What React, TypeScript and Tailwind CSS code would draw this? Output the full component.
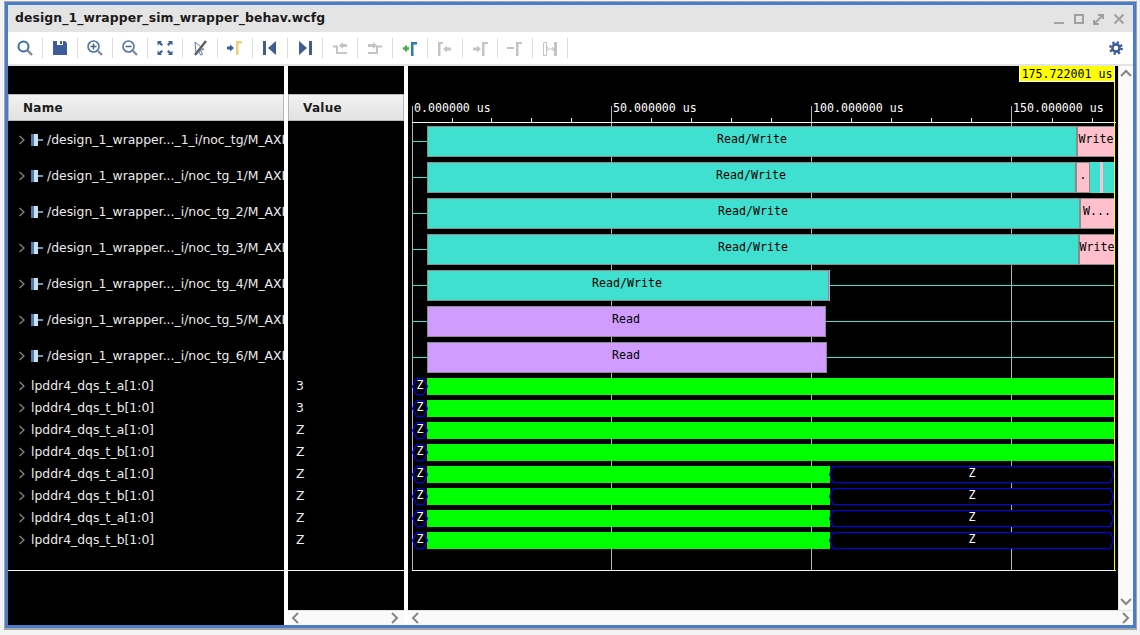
const BLUE = "#3d5c99";
const GRAY = "#c4c4c4";

const groupRows = [
  "/design_1_wrapper..._1_i/noc_tg/M_AXI",
  "/design_1_wrapper..._i/noc_tg_1/M_AXI",
  "/design_1_wrapper..._i/noc_tg_2/M_AXI",
  "/design_1_wrapper..._i/noc_tg_3/M_AXI",
  "/design_1_wrapper..._i/noc_tg_4/M_AXI",
  "/design_1_wrapper..._i/noc_tg_5/M_AXI",
  "/design_1_wrapper..._i/noc_tg_6/M_AXI",
];

const busRows = [
  { name: "lpddr4_dqs_t_a[1:0]", value: "3", end: 1114 },
  { name: "lpddr4_dqs_t_b[1:0]", value: "3", end: 1114 },
  { name: "lpddr4_dqs_t_a[1:0]", value: "Z", end: 1114 },
  { name: "lpddr4_dqs_t_b[1:0]", value: "Z", end: 1114 },
  { name: "lpddr4_dqs_t_a[1:0]", value: "Z", end: 830 },
  { name: "lpddr4_dqs_t_b[1:0]", value: "Z", end: 830 },
  { name: "lpddr4_dqs_t_a[1:0]", value: "Z", end: 830 },
  { name: "lpddr4_dqs_t_b[1:0]", value: "Z", end: 830 },
];

const TEAL = "#40e0d0";
const PINK = "#ffc0cb";
const PURPLE = "#d09cff";

type Seg = { x0: number; x1: number; fill: string; label?: string; cx?: number; flat?: boolean };

const txnRows: Seg[][] = [
  [
    { x0: 427, x1: 1077, fill: TEAL, label: "Read/Write", cx: 752 },
    { x0: 1077, x1: 1114, fill: PINK, label: "Write", cx: 1096 },
  ],
  [
    { x0: 427, x1: 1076, fill: TEAL, label: "Read/Write", cx: 751 },
    { x0: 1076, x1: 1090, fill: PINK, label: ".", cx: 1083 },
    { x0: 1090, x1: 1100, fill: TEAL, flat: true },
    { x0: 1100, x1: 1103, fill: PINK, flat: true },
    { x0: 1103, x1: 1114, fill: TEAL, flat: true },
  ],
  [
    { x0: 427, x1: 1080, fill: TEAL, label: "Read/Write", cx: 753 },
    { x0: 1080, x1: 1114, fill: PINK, label: "W...", cx: 1097 },
  ],
  [
    { x0: 427, x1: 1079, fill: TEAL, label: "Read/Write", cx: 753 },
    { x0: 1079, x1: 1114, fill: PINK, label: "Write", cx: 1097 },
  ],
  [{ x0: 427, x1: 829, fill: TEAL, label: "Read/Write", cx: 627 }],
  [{ x0: 427, x1: 826, fill: PURPLE, label: "Read", cx: 626 }],
  [{ x0: 427, x1: 827, fill: PURPLE, label: "Read", cx: 626 }],
];

function Chevron({ dir }: { dir: "left" | "right" | "up" | "down" }) {
  const points = {
    left: "8,2 3,7 8,12",
    right: "4,2 9,7 4,12",
    up: "2,9 7,4 12,9",
    down: "2,4 7,9 12,4",
  }[dir];
  return (
    <svg width="14" height="14" viewBox="0 0 14 14">
      <polyline points={points} fill="none" stroke="#858585" strokeWidth="2" />
    </svg>
  );
}

function RowChevron() {
  return (
    <svg width="8" height="10" viewBox="0 0 8 10" className="shrink-0">
      <polyline points="1.5,1 6,5 1.5,9" fill="none" stroke="#8a8a8a" strokeWidth="1.2" />
    </svg>
  );
}

function SignalIcon() {
  return (
    <svg width="12" height="12" viewBox="0 0 12 12" className="block shrink-0">
      <rect x="0" y="0" width="3" height="12" fill="#4d7ca8" />
      <rect x="3" y="0" width="4" height="12" fill="#c9deef" />
      <rect x="7" y="5" width="5" height="2" fill="#6d96bb" />
    </svg>
  );
}

const Ic = ({ children }: { children: React.ReactNode }) => (
  <svg width="20" height="20" viewBox="0 0 20 20">
    {children}
  </svg>
);

const icons: React.ReactNode[] = [
  // search
  <Ic>
    <circle cx="8.5" cy="8.5" r="5" fill="none" stroke="#3f6ea3" strokeWidth="2" />
    <line x1="12.5" y1="12.5" x2="17" y2="17" stroke="#808a96" strokeWidth="2.4" />
  </Ic>,
  // save
  <Ic>
    <path d="M3 3H7V7H13V3H15L17 5V17H3Z" fill={BLUE} />
    <rect x="10" y="3" width="2" height="3" fill={BLUE} />
  </Ic>,
  // zoom in
  <Ic>
    <circle cx="8.5" cy="8.5" r="5.5" fill="none" stroke="#4d74a6" strokeWidth="1.6" />
    <path d="M8.5 5.5V11.5M5.5 8.5H11.5" stroke="#4d5f80" strokeWidth="1.5" />
    <line x1="13" y1="13" x2="17" y2="17" stroke="#808a96" strokeWidth="2.4" />
  </Ic>,
  // zoom out
  <Ic>
    <circle cx="8.5" cy="8.5" r="5.5" fill="none" stroke="#4d74a6" strokeWidth="1.6" />
    <path d="M5.5 8.5H11.5" stroke="#4d5f80" strokeWidth="1.5" />
    <line x1="13" y1="13" x2="17" y2="17" stroke="#808a96" strokeWidth="2.4" />
  </Ic>,
  // zoom fit
  <Ic>
    <path d="M2.500 3H7L5.800 4.200L8 6.400L6.400 8L4.200 5.800L2.500 7.500Z" fill={BLUE} />
    <path d="M17.500 3H13L14.200 4.200L12 6.400L13.600 8L15.800 5.800L17.500 7.500Z" fill={BLUE} />
    <path d="M2.500 17H7L5.800 15.800L8 13.600L6.400 12L4.200 14.200L2.500 12.500Z" fill={BLUE} />
    <path d="M17.500 17H13L14.200 15.800L12 13.600L13.600 12L15.800 14.200L17.500 12.500Z" fill={BLUE} />
  </Ic>,
  // snap to transition, off
  <Ic>
    <path d="M5 4L14 11.500L10.500 12L12.500 16.500L10.500 17L8.500 12.500L6 15Z" fill="none" stroke="#5b7bb0" strokeWidth="1" />
    <path d="M16 3L5 17" stroke="#5f5f5f" strokeWidth="2.400" />
  </Ic>,
  // go to cursor
  <Ic>
    <path d="M2 8.500H5V6.500L9 10L5 13.500V11.500H2Z" fill={BLUE} />
    <path d="M11 17V3H17V5.500H13.500V17Z" fill="#e9d27a" />
  </Ic>,
  // previous
  <Ic>
    <rect x="3" y="3" width="3" height="14" fill={BLUE} />
    <path d="M16 3V17L8 10Z" fill={BLUE} />
  </Ic>,
  // next
  <Ic>
    <rect x="14" y="3" width="3" height="14" fill={BLUE} />
    <path d="M4 3V17L12 10Z" fill={BLUE} />
  </Ic>,
  // previous transition, disabled
  <Ic>
    <path d="M3 8.500H7V15H17" fill="none" stroke={GRAY} strokeWidth="2" />
    <path d="M9 7.500L13 4V6H17V9H13V11Z" fill={GRAY} />
  </Ic>,
  // next transition, disabled
  <Ic>
    <path d="M3 6H8V4L12 7.500L8 11V9H3Z" fill={GRAY} />
    <path d="M3 15H12V8.500H17" fill="none" stroke={GRAY} strokeWidth="2" />
  </Ic>,
  // add marker
  <Ic>
    <path d="M3 10.500H9M6 7.500V13.500" stroke="#41b04a" strokeWidth="2.400" />
    <path d="M11 18V4H17V6.500H13.500V18Z" fill="#2f79b5" />
  </Ic>,
  // previous marker, disabled
  <Ic>
    <path d="M3 18V4H8V6H5.500V18Z" fill={GRAY} />
    <path d="M8 11L12 7.500V9.500H16V12.500H12V14.500Z" fill={GRAY} />
  </Ic>,
  // next marker, disabled
  <Ic>
    <path d="M3 9.500H7V7.500L11 11L7 14.500V12.500H3Z" fill={GRAY} />
    <path d="M12 18V4H18V6H14.500V18Z" fill={GRAY} />
  </Ic>,
  // delete marker, disabled
  <Ic>
    <path d="M2 10H9" stroke={GRAY} strokeWidth="2" />
    <path d="M11 18V4H17V6H13.500V18Z" fill={GRAY} />
  </Ic>,
  // marker distance, disabled
  <Ic>
    <path d="M3.500 4.500H6.500V17.500H3.500Z" fill="none" stroke={GRAY} strokeWidth="1" />
    <rect x="14" y="4" width="3" height="14" fill={GRAY} />
    <path d="M6 11H14M8 9L6 11L8 13M12 9L14 11L12 13" fill="none" stroke={GRAY} strokeWidth="1" />
  </Ic>,
];

function Waveform() {
  const monoClass = "font-['DejaVu_Sans_Mono',monospace] text-[11.6px]";
  const majors = [412, 611, 811, 1011];
  const minors = [452, 491, 531, 571, 651, 691, 731, 771, 851, 891, 931, 971, 1052, 1092];
  const labels = [
    { x: 414, text: "0.000000 us" },
    { x: 613, text: "50.000000 us" },
    { x: 813, text: "100.000000 us" },
    { x: 1013, text: "150.000000 us" },
  ];
  return (
    <svg width="710" height="544" viewBox="408 66 710 544" className="block bg-black">
      <g shapeRendering="crispEdges">
        {/* grid */}
        {majors.map((x) => (
          <rect key={x} x={x} y={106} width="1" height="464" fill="#b4b4b4" />
        ))}
        {minors.map((x) => (
          <rect key={x} x={x} y={118} width="1" height="4" fill="#f0f0f0" />
        ))}
        <rect x="412" y="122" width="704" height="1" fill="#f4f4f4" />
        <rect x="412" y="570" width="704" height="1" fill="#f4f4f4" />
      </g>
      {labels.map((l) => (
        <text key={l.x} x={l.x} y={112} fill="#ffffff" className={monoClass}>
          {l.text}
        </text>
      ))}

      {/* transaction rows */}
      {txnRows.map((segs, i) => {
        const top = 126 + i * 36;
        const last = segs[segs.length - 1].x1;
        return (
          <g key={i}>
            <rect x="412" y={top + 15} width="15" height="1" fill={TEAL} />
            {last < 1114 && <rect x={last} y={top + 15} width={1114 - last} height="1" fill={TEAL} />}
            {segs.map((s) =>
              s.flat ? (
                <rect key={s.x0} x={s.x0} y={top} width={s.x1 - s.x0} height="31" fill={s.fill} />
              ) : (
                <g key={s.x0}>
                  <rect x={s.x0} y={top} width={s.x1 - s.x0} height="31" fill="#8c8c8c" />
                  <rect
                    x={s.x0 + 1}
                    y={top + 1}
                    width={s.x1 - s.x0 - (s.x1 < 1114 ? 2 : 1)}
                    height="29"
                    fill={s.fill}
                  />
                  {s.label && (
                    <text x={s.cx} y={top + 17} fill="#000000" textAnchor="middle" className={monoClass}>
                      {s.label}
                    </text>
                  )}
                </g>
              ),
            )}
          </g>
        );
      })}
      <rect x="829" y="270" width="1" height="31" fill="#c9a0f0" />

      {/* bus rows */}
      {busRows.map((r, i) => {
        const top = 378 + i * 22;
        return (
          <g key={i}>
            <rect x="427" y={top} width={r.end - 427} height="17" fill="#00ff00" />
            <polygon
              points={`412.5,${top + 8.5} 416.5,${top + 0.5} 423.5,${top + 0.5} 427.5,${top + 8.5} 423.5,${top + 16.5} 416.5,${top + 16.5}`}
              fill="#000000"
              stroke="#0000ff"
              strokeWidth="1.2"
            />
            <text x="420" y={top + 10.5} fill="#ffffff" textAnchor="middle" className={monoClass}>
              Z
            </text>
            {r.end < 1114 && (
              <>
                <polygon
                  points={`829.5,${top + 8.5} 833,${top + 0.5} 1110.5,${top + 0.5} 1113.5,${top + 8.5} 1110.5,${top + 16.5} 833,${top + 16.5}`}
                  fill="#000000"
                  stroke="#0000ff"
                  strokeWidth="1.2"
                />
                <text x="972" y={top + 10.5} fill="#ffffff" textAnchor="middle" className={monoClass}>
                  Z
                </text>
              </>
            )}
          </g>
        );
      })}

      {/* cursor */}
      <rect x="1114" y="81" width="1" height="490" fill="#ffff00" />
      <rect x="1019" y="66" width="96" height="16" fill="#ffffff" />
      <rect x="1020" y="66" width="94" height="15" fill="#ffff00" />
      <text x="1067" y="78" fill="#000000" textAnchor="middle" className={monoClass}>
        175.722001 us
      </text>
    </svg>
  );
}

function ColumnHeader({ label }: { label: string }) {
  return (
    <div className="flex h-[27px] items-center border border-[#b8b8b8] bg-gradient-to-b from-[#f2f2f2] to-[#e2e2e2] pl-[14px] text-[12px] font-bold tracking-[0.3px] text-[#1c1c1c]">
      {label}
    </div>
  );
}

export default function App() {
  return (
    <div className="h-[635px] w-[1140px] overflow-hidden bg-[#f3f3f3] pl-[4px] pt-[1px] font-['DejaVu_Sans',sans-serif]">
      <div className="flex h-[629px] w-[1133px] flex-col border border-b-2 border-[#a6a6a6]">
        <div className="flex h-full flex-col border-[3px] border-[#4a7cc9]">
          {/* title bar */}
          <div className="flex h-[27px] shrink-0 items-center justify-between bg-[#e4e4e4] pl-[7px] pr-[4px]">
            <span className="text-[12.4px] font-bold tracking-[0.1px] text-[#1a1a1a]">
              design_1_wrapper_sim_wrapper_behav.wcfg
            </span>
            <div className="flex">
              <svg width="20" height="20" viewBox="0 0 20 20">
                <rect x="5" y="13" width="10" height="2" fill="#a4a4a4" />
              </svg>
              <svg width="20" height="20" viewBox="0 0 20 20">
                <rect x="6" y="6" width="8" height="8" fill="none" stroke="#a0a0a0" strokeWidth="2" />
              </svg>
              <svg width="20" height="20" viewBox="0 0 20 20">
                <path d="M9 6H14V10M5 11V15H10" fill="none" stroke="#a0a0a0" strokeWidth="2" />
                <path d="M6 14L14 6" stroke="#a0a0a0" strokeWidth="2" />
              </svg>
              <svg width="20" height="20" viewBox="0 0 20 20">
                <path d="M5.500 5.500L14.500 14.500M14.500 5.500L5.500 14.500" stroke="#a0a0a0" strokeWidth="2" />
              </svg>
            </div>
          </div>

          {/* toolbar */}
          <div className="flex h-[34px] shrink-0 items-start border-b-2 border-[#e4e4e4] bg-white pr-[10px]">
            {icons.map((icon, i) => (
              <div key={i} className="mt-[6px] flex h-[20px] w-[35px] items-center justify-center border-r border-[#dcdcdc]">
                {icon}
              </div>
            ))}
            <div className="ml-auto mt-[9px]">
              <svg width="14" height="14" viewBox="0 0 14 14" className="block">
                <circle cx="7" cy="7" r="3.600" fill="none" stroke={BLUE} strokeWidth="2.600" />
                <circle cx="7" cy="7" r="5.700" fill="none" stroke={BLUE} strokeWidth="2.400" strokeDasharray="2.240 2.240" />
              </svg>
            </div>
          </div>

          {/* body */}
          <div className="flex min-h-0 flex-1 bg-white">
            {/* names */}
            <div className="flex w-[276px] shrink-0 flex-col bg-black">
              <div className="h-[28px]" />
              <ColumnHeader label="Name" />
              <div className="h-[1px]" />
              {groupRows.map((name) => (
                <div key={name} className="flex h-[36px] items-center pl-[10px] text-[12.4px] text-[#ececec]">
                  <RowChevron />
                  <span className="ml-[5px]">
                    <SignalIcon />
                  </span>
                  <span className="ml-[4px] overflow-hidden whitespace-nowrap">{name}</span>
                </div>
              ))}
              <div className="h-[1px]" />
              {busRows.map((r, i) => (
                <div key={i} className="flex h-[22px] items-center pl-[10px] text-[12.4px] text-[#ececec]">
                  <RowChevron />
                  <span className="ml-[5px] whitespace-nowrap">{r.name}</span>
                </div>
              ))}
              <div className="h-[19px]" />
              <div className="h-[1px] bg-[#f4f4f4]" />
            </div>

            <div className="w-[4px] shrink-0" />

            {/* values */}
            <div className="flex w-[116px] shrink-0 flex-col">
              <div className="flex h-[544px] shrink-0 flex-col bg-black">
                <div className="h-[28px]" />
                <ColumnHeader label="Value" />
                <div className="h-[254px]" />
                {busRows.map((r, i) => (
                  <div key={i} className="flex h-[22px] items-center pl-[8px] text-[12.4px] text-[#ececec]">
                    {r.value}
                  </div>
                ))}
                <div className="h-[19px]" />
                <div className="h-[1px] bg-[#f4f4f4]" />
              </div>
              <div className="flex flex-1 items-center justify-between border-t border-[#e4e4e4] bg-[#fafafa] px-[2px]">
                <Chevron dir="left" />
                <Chevron dir="right" />
              </div>
            </div>

            <div className="w-[4px] shrink-0" />

            {/* wave */}
            <div className="flex min-w-0 flex-1 flex-col">
              <div className="flex h-[544px] shrink-0">
                <Waveform />
                <div className="flex flex-1 flex-col items-center justify-between border-l border-[#e4e4e4] bg-[#fafafa] py-[1px]">
                  <Chevron dir="up" />
                  <Chevron dir="down" />
                </div>
              </div>
              <div className="flex flex-1 items-center justify-between border-t border-[#e4e4e4] bg-[#fafafa] pl-[2px]">
                <Chevron dir="left" />
                <Chevron dir="right" />
              </div>
            </div>
          </div>
        </div>
      </div>
    </div>
  );
}
